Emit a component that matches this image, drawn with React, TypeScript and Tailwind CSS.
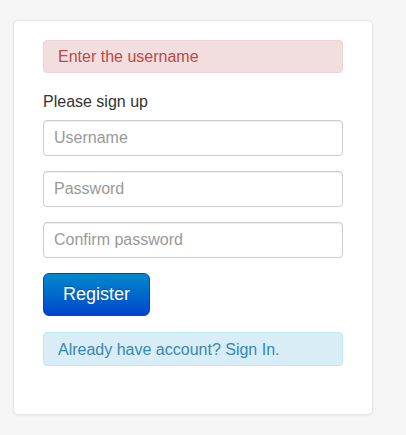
const inputs = ['Username', 'Password', 'Confirm password'];

export default function App() {
  return (
    <div className="min-h-[435px] bg-[#f5f5f5] pt-[20px] pl-[13px] font-['Liberation_Sans',Arial,sans-serif]">
      <div className="w-[360px] rounded-[5px] border border-[#e5e5e5] bg-white px-[29px] pt-[19px] pb-[48px] shadow-[0_1px_2px_rgba(0,0,0,0.05)]">
        <div className="flex h-[33px] items-center rounded-[4px] border border-[#eed3d7] bg-[#f2dede] px-[14px] pt-px text-[16px] text-[#b94a48]">
          Enter the username
        </div>

        <h2 className="mt-[19px] text-[16px] leading-[20px] text-[#333]">Please sign up</h2>

        <form className="mt-[8px] flex flex-col gap-[15px]" onSubmit={(e) => e.preventDefault()}>
          {inputs.map((p) => (
            <input
              key={p}
              type={p === 'Username' ? 'text' : 'password'}
              placeholder={p}
              className="h-[36px] w-full rounded-[4px] border border-[#ccc] bg-white px-[10px] text-[16px] text-[#555] shadow-[inset_0_1px_1px_rgba(0,0,0,0.075)] outline-none placeholder:text-[#999]"
            />
          ))}
          <button
            type="submit"
            className="h-[43px] w-[107px] rounded-[6px] border border-[#0044cc] bg-gradient-to-b from-[#0088cc] to-[#0044cc] text-[18px] text-white [text-shadow:0_-1px_0_rgba(0,0,0,0.25)]"
          >
            Register
          </button>
        </form>

        <div className="mt-[16px] flex h-[34px] items-center rounded-[4px] border border-[#bce8f1] bg-[#d9edf7] px-[14px] pt-px text-[16px] text-[#3a87ad]">
          Already have account?&nbsp;
          <a href="#" className="text-[#2d8ab9]">Sign In.</a>
        </div>
      </div>
    </div>
  );
}
